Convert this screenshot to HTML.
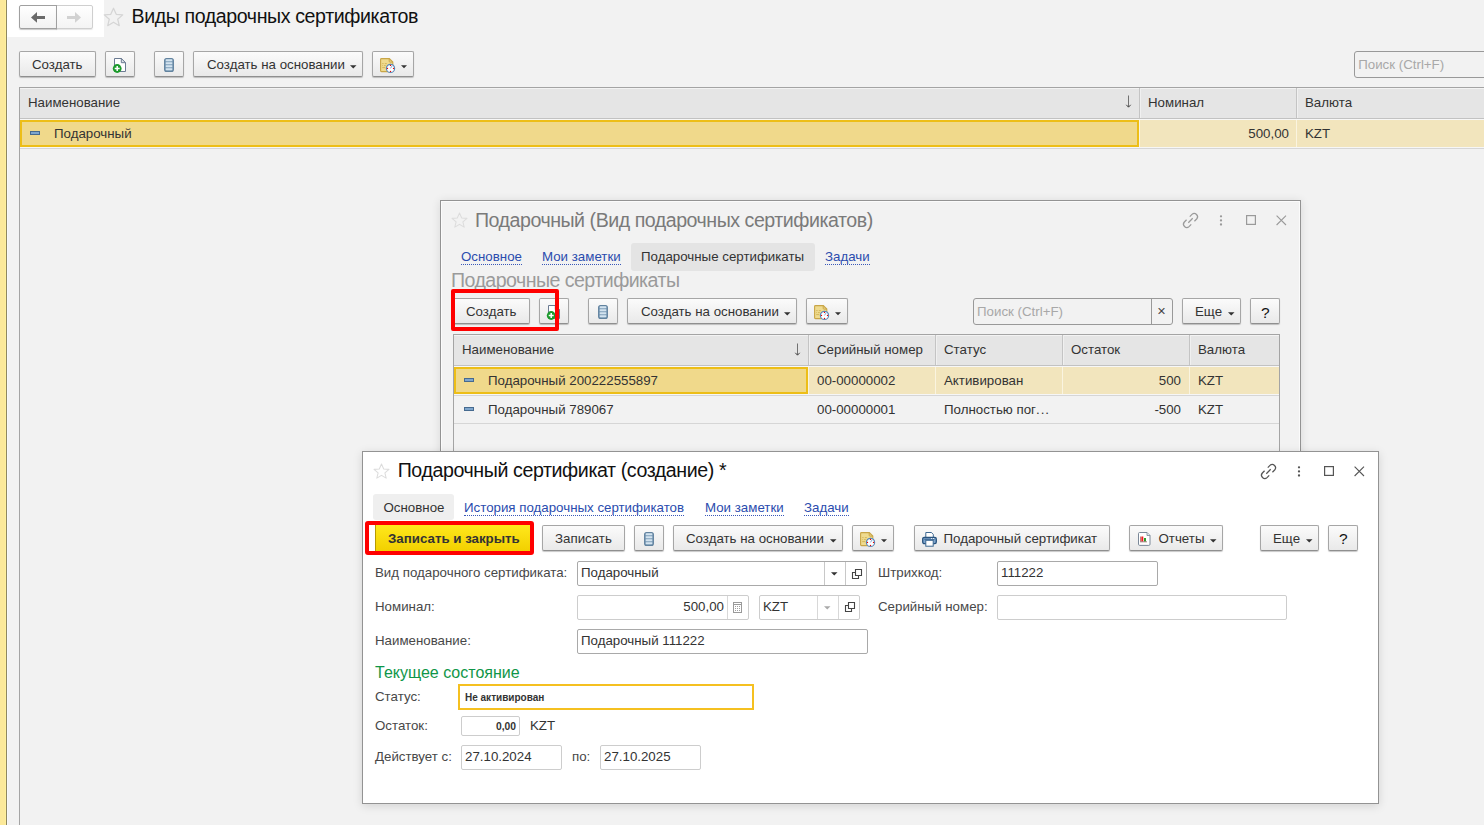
<!DOCTYPE html>
<html><head><meta charset="utf-8">
<style>
*{box-sizing:border-box;margin:0;padding:0}
html,body{width:1484px;height:825px;overflow:hidden}
body{position:relative;background:#f2f2f2;font-family:"Liberation Sans",sans-serif;font-size:13.3px;color:#333}
.a{position:absolute}
svg.a{overflow:visible}
.t{position:absolute;white-space:nowrap;line-height:1}
.btn{position:absolute;border:1px solid #a6a6a6;border-bottom-color:#8f8f8f;border-radius:2px;background:linear-gradient(#fbfbfb,#e9e9e9);box-shadow:0 1px 1px rgba(0,0,0,.22)}
.lnk{color:#2a4cae;border-bottom:1px dotted #3a58b8}
</style></head><body>
<div class="a" style="left:0px;top:0px;width:6px;height:825px;background:#fce99a"></div>
<div class="a" style="left:5px;top:0px;width:1px;height:825px;background:#fff09c"></div>
<div class="a" style="left:6px;top:0px;width:1px;height:825px;background:#8f8760"></div>
<div class="a" style="left:7px;top:37px;width:1px;height:788px;background:#f8f8f8"></div>
<div class="a" style="left:7px;top:0px;width:97px;height:37px;background:#fff"></div>
<div class="btn" style="left:19px;top:5px;width:38px;height:24px;background:linear-gradient(#fff,#f2f2f2);border-color:#a0a0a0;border-radius:2px 0 0 2px"></div>
<div class="btn" style="left:56px;top:5px;width:37px;height:24px;background:linear-gradient(#fff,#f4f4f4);border-color:#cfcfcf;border-radius:0 2px 2px 0;box-shadow:0 1px 1px rgba(0,0,0,.1)"></div>
<div class="a" style="left:56px;top:5px;width:1px;height:24px;background:#a0a0a0"></div>
<svg class="a" style="left:31px;top:12px" width="14" height="11" viewBox="0 0 14 11"><path d="M0 5.4 L6 0 V3.9 H14 V6.9 H6 V10.8 Z" fill="#6a6a6a"/></svg>
<svg class="a" style="left:67px;top:12px" width="14" height="11" viewBox="0 0 14 11"><path d="M14 5.4 L8 0 V3.9 H0 V6.9 H8 V10.8 Z" fill="#d2d2d2"/></svg>
<svg class="a" style="left:103.4px;top:6.5px" width="21" height="21" viewBox="0 0 20 20"><path d="M10 1.2 L12.6 7 L18.8 7.5 L14 11.6 L15.5 17.8 L10 14.5 L4.5 17.8 L6 11.6 L1.2 7.5 L7.4 7 Z" fill="none" stroke="#d5d5d5" stroke-width="1.2" stroke-linejoin="round"/></svg>
<div class="t" style="left:131.5px;top:7.11px;font-size:19.6px;color:#111;letter-spacing:-0.4px">Виды подарочных сертификатов</div>
<div class="btn" style="left:19px;top:51px;width:77px;height:26px;"></div>
<div class="t" style="left:32px;top:57.94px">Создать</div>
<div class="btn" style="left:105px;top:51px;width:30px;height:26px;"></div>
<svg class="a" style="left:112.1px;top:57.099999999999994px" width="17" height="17" viewBox="0 0 17 17"><path d="M2.5 1.5 H9.3 L13.5 5.7 V14.5 H2.5 Z" fill="#fff" stroke="#6b7b92" stroke-width="1"/>
<path d="M9.3 1.5 V5.7 H13.5 Z" fill="#dfe4ea" stroke="#6b7b92" stroke-width="1" stroke-linejoin="round"/>
<circle cx="5.2" cy="11.5" r="4.4" fill="#1c9a2c"/>
<path d="M5.2 9 V14 M2.7 11.5 H7.7" stroke="#fff" stroke-width="1.5"/></svg>
<div class="btn" style="left:154px;top:51px;width:30px;height:26px;"></div>
<svg class="a" style="left:164.2px;top:58.099999999999994px" width="10" height="14" viewBox="0 0 10 14"><rect x="0.6" y="0.6" width="8.8" height="12.8" rx="2" fill="#7f9fba" stroke="#62839f" stroke-width="1.1"/><rect x="1.6" y="1.35" width="6.8" height="1.8" rx="0.8" fill="#d3e3ef"/><rect x="1.6" y="4.35" width="6.8" height="1.8" rx="0.8" fill="#d3e3ef"/><rect x="1.6" y="7.35" width="6.8" height="1.8" rx="0.8" fill="#d3e3ef"/><rect x="1.6" y="10.35" width="6.8" height="1.8" rx="0.8" fill="#d3e3ef"/></svg>
<div class="btn" style="left:193px;top:51px;width:170px;height:26px;"></div>
<div class="t" style="left:207px;top:57.94px">Создать на основании</div>
<svg class="a" style="left:350px;top:65px" width="7" height="4" viewBox="0 0 7 4"><path d="M0 0.2 H6.5 L3.25 3.4 Z" fill="#333"/></svg>
<div class="btn" style="left:372px;top:51px;width:42px;height:26px;"></div>
<svg class="a" style="left:380.0px;top:58.0px" width="30" height="16" viewBox="0 0 30 16"><path d="M1.5 0.6 H9.3 L12.8 4.1 V12.7 Q12.8 13.6 11.9 13.6 H1.5 Q0.6 13.6 0.6 12.7 V1.5 Q0.6 0.6 1.5 0.6 Z" fill="#efdb8f" stroke="#c8a547" stroke-width="1.1"/>
<path d="M9.2 0.6 V3.3 Q9.2 4.1 10 4.1 H12.8" fill="none" stroke="#c8a547" stroke-width="1"/>
<path d="M2.2 5.6 H3.6 M4.8 5.6 H6.8 M2.2 7.6 H2.9 M3.9 7.6 H5.8 M2.2 9.6 H5.2" stroke="#d0b255" stroke-width="0.9"/>
<circle cx="10.5" cy="10.4" r="4.1" fill="#fff" stroke="#5a89b8" stroke-width="1.2"/>
<circle cx="10.5" cy="7.4" r="0.65" fill="#e00"/><circle cx="10.5" cy="13.4" r="0.65" fill="#e00"/>
<circle cx="7.5" cy="10.4" r="0.65" fill="#e00"/><circle cx="13.5" cy="10.4" r="0.65" fill="#e00"/>
<path d="M10.5 10.4 L12 8" stroke="#7a9ed0" stroke-width="0.9"/>
<path d="M21 7.3 H27 L24 10.3 Z" fill="#333"/></svg>
<div class="a" style="left:1354px;top:51px;width:140px;height:27px;background:#f2f2f2;border:1px solid #999;border-radius:3px"></div>
<div class="t" style="left:1358.2px;top:57.94px;color:#a8a8a8">Поиск (Ctrl+F)</div>
<div class="a" style="left:19px;top:87px;width:1480px;height:900px;border:1px solid #a4a4a4;background:#f2f2f2"></div>
<div class="a" style="left:20px;top:88px;width:1478px;height:31px;background:#e5e5e5;border-top:1px solid #f3f3f3;border-bottom:1px solid #c2c2c2"></div>
<div class="a" style="left:20px;top:119px;width:1478px;height:1px;background:#f7f7f7"></div>
<div class="a" style="left:1139px;top:88px;width:1px;height:30px;background:#c4c4c4"></div>
<div class="a" style="left:1140px;top:88px;width:1px;height:30px;background:#f0f0f0"></div>
<div class="a" style="left:1296px;top:88px;width:1px;height:30px;background:#c4c4c4"></div>
<div class="a" style="left:1297px;top:88px;width:1px;height:30px;background:#f0f0f0"></div>
<div class="a" style="left:20px;top:120px;width:1478px;height:27px;background:#f2e5bd"></div>
<div class="a" style="left:20px;top:147px;width:1478px;height:1px;background:#f6f6f6"></div>
<div class="a" style="left:20px;top:148px;width:1478px;height:1px;background:#d6d6d6"></div>
<div class="a" style="left:1139px;top:120px;width:1px;height:27px;background:#faf4e0"></div>
<div class="a" style="left:1296px;top:120px;width:1px;height:27px;background:#faf4e0"></div>
<div class="a" style="left:20px;top:120px;width:1119px;height:27px;background:#f0d98b;border:2px solid #edbe17"></div>
<div class="t" style="left:28px;top:96.34px">Наименование</div>
<svg class="a" style="left:1124px;top:95px" width="9" height="14" viewBox="0 0 9 14"><path d="M4.5 0.5 V12" stroke="#6a6a6a" stroke-width="0.95"/><path d="M2.3 9.8 L4.5 12.2 L6.7 9.8" fill="none" stroke="#444" stroke-width="1"/></svg>
<div class="t" style="left:1148px;top:96.34px">Номинал</div>
<div class="t" style="left:1305px;top:96.34px">Валюта</div>
<div class="a" style="left:30px;top:131px;width:10px;height:4.2px;background:#7ea6cd;border:1px solid #466a8f"></div>
<div class="t" style="left:54px;top:127.04px">Подарочный</div>
<div class="t" style="left:1289px;top:127.04px;transform:translateX(-100%)">500,00</div>
<div class="t" style="left:1305px;top:127.04px">KZT</div>
<div class="a" style="left:440px;top:200px;width:861px;height:300px;border:1px solid #939393;background:#f2f2f2;box-shadow:inset 0 0 0 1px #fbfbfb, 0 1px 9px rgba(0,0,0,.11)"></div>
<svg class="a" style="left:451px;top:211.5px" width="17" height="17" viewBox="0 0 20 20"><path d="M10 1.2 L12.6 7 L18.8 7.5 L14 11.6 L15.5 17.8 L10 14.5 L4.5 17.8 L6 11.6 L1.2 7.5 L7.4 7 Z" fill="none" stroke="#dcdcdc" stroke-width="1.2" stroke-linejoin="round"/></svg>
<div class="t" style="left:475px;top:210.51px;font-size:19.6px;color:#7a7a7a;letter-spacing:-0.47px">Подарочный (Вид подарочных сертификатов)</div>
<svg class="a" style="left:1182.5px;top:212.5px" width="104" height="16" viewBox="0 0 104 16"><g fill="none" stroke="#9a9a9a" stroke-width="1.25" stroke-linecap="butt">
<path d="M6.77 3.57 L8.97 1.37 A3.3 3.3 0 0 1 13.63 6.03 L11.43 8.23"/>
<path d="M3.57 6.77 L1.37 8.97 A3.3 3.3 0 0 0 6.03 13.63 L8.23 11.43"/>
<path d="M5.3 9.7 L9.7 5.3"/>
</g>
<circle cx="38" cy="3.3" r="1.15" fill="#9a9a9a"/><circle cx="38" cy="7.4" r="1.15" fill="#9a9a9a"/><circle cx="38" cy="11.5" r="1.15" fill="#9a9a9a"/>
<rect x="63.6" y="2.6" width="8.8" height="8.8" fill="none" stroke="#9a9a9a" stroke-width="1.2"/>
<path d="M93.6 2.6 L103 12 M103 2.6 L93.6 12" stroke="#9a9a9a" stroke-width="1.1"/></svg>
<div class="t" style="left:461px;top:249.74px"><span class="lnk">Основное</span></div>
<div class="t" style="left:542px;top:249.74px"><span class="lnk">Мои заметки</span></div>
<div class="a" style="left:631px;top:243px;width:184px;height:28px;background:#e4e4e4;border-radius:3px"></div>
<div class="t" style="left:641px;top:249.74px">Подарочные сертификаты</div>
<div class="t" style="left:825px;top:249.74px"><span class="lnk">Задачи</span></div>
<div class="t" style="left:451px;top:271.41px;font-size:19.6px;color:#9a9a9a;letter-spacing:-0.54px">Подарочные сертификаты</div>
<div class="btn" style="left:453px;top:298px;width:77px;height:26px;"></div>
<div class="t" style="left:466px;top:305.24px">Создать</div>
<div class="btn" style="left:539px;top:298px;width:30px;height:26px;"></div>
<svg class="a" style="left:546.1999999999999px;top:304.0px" width="17" height="17" viewBox="0 0 17 17"><path d="M2.5 1.5 H9.3 L13.5 5.7 V14.5 H2.5 Z" fill="#fff" stroke="#6b7b92" stroke-width="1"/>
<path d="M9.3 1.5 V5.7 H13.5 Z" fill="#dfe4ea" stroke="#6b7b92" stroke-width="1" stroke-linejoin="round"/>
<circle cx="5.2" cy="11.5" r="4.4" fill="#1c9a2c"/>
<path d="M5.2 9 V14 M2.7 11.5 H7.7" stroke="#fff" stroke-width="1.5"/></svg>
<div class="btn" style="left:588px;top:298px;width:30px;height:26px;"></div>
<svg class="a" style="left:597.9000000000001px;top:305.0px" width="10" height="14" viewBox="0 0 10 14"><rect x="0.6" y="0.6" width="8.8" height="12.8" rx="2" fill="#7f9fba" stroke="#62839f" stroke-width="1.1"/><rect x="1.6" y="1.35" width="6.8" height="1.8" rx="0.8" fill="#d3e3ef"/><rect x="1.6" y="4.35" width="6.8" height="1.8" rx="0.8" fill="#d3e3ef"/><rect x="1.6" y="7.35" width="6.8" height="1.8" rx="0.8" fill="#d3e3ef"/><rect x="1.6" y="10.35" width="6.8" height="1.8" rx="0.8" fill="#d3e3ef"/></svg>
<div class="btn" style="left:627px;top:298px;width:170px;height:26px;"></div>
<div class="t" style="left:641px;top:305.24px">Создать на основании</div>
<svg class="a" style="left:784px;top:312px" width="7" height="4" viewBox="0 0 7 4"><path d="M0 0.2 H6.5 L3.25 3.4 Z" fill="#333"/></svg>
<div class="btn" style="left:806px;top:298px;width:42px;height:26px;"></div>
<svg class="a" style="left:814.0px;top:304.9px" width="30" height="16" viewBox="0 0 30 16"><path d="M1.5 0.6 H9.3 L12.8 4.1 V12.7 Q12.8 13.6 11.9 13.6 H1.5 Q0.6 13.6 0.6 12.7 V1.5 Q0.6 0.6 1.5 0.6 Z" fill="#efdb8f" stroke="#c8a547" stroke-width="1.1"/>
<path d="M9.2 0.6 V3.3 Q9.2 4.1 10 4.1 H12.8" fill="none" stroke="#c8a547" stroke-width="1"/>
<path d="M2.2 5.6 H3.6 M4.8 5.6 H6.8 M2.2 7.6 H2.9 M3.9 7.6 H5.8 M2.2 9.6 H5.2" stroke="#d0b255" stroke-width="0.9"/>
<circle cx="10.5" cy="10.4" r="4.1" fill="#fff" stroke="#5a89b8" stroke-width="1.2"/>
<circle cx="10.5" cy="7.4" r="0.65" fill="#e00"/><circle cx="10.5" cy="13.4" r="0.65" fill="#e00"/>
<circle cx="7.5" cy="10.4" r="0.65" fill="#e00"/><circle cx="13.5" cy="10.4" r="0.65" fill="#e00"/>
<path d="M10.5 10.4 L12 8" stroke="#7a9ed0" stroke-width="0.9"/>
<path d="M21 7.3 H27 L24 10.3 Z" fill="#333"/></svg>
<div class="a" style="left:973px;top:298px;width:200px;height:27px;background:#f2f2f2;border:1px solid #999;border-radius:3px"></div>
<div class="a" style="left:1151px;top:299px;width:1px;height:25px;background:#999"></div>
<div class="t" style="left:977px;top:305.24px;color:#a8a8a8">Поиск (Ctrl+F)</div>
<div class="t" style="left:1161.5px;top:303.73px;font-size:14.5px;color:#444;transform:translateX(-50%)">×</div>
<div class="btn" style="left:1182px;top:298px;width:59px;height:26px;"></div>
<div class="t" style="left:1195px;top:305.24px">Еще</div>
<svg class="a" style="left:1228px;top:312px" width="7" height="4" viewBox="0 0 7 4"><path d="M0 0.2 H6.5 L3.25 3.4 Z" fill="#333"/></svg>
<div class="btn" style="left:1250px;top:298px;width:30px;height:26px;"></div>
<div class="t" style="left:1265.3px;top:304.88px;font-size:15.5px;color:#111;transform:translateX(-50%)">?</div>
<div class="a" style="left:451px;top:289px;width:108px;height:42px;border:4px solid #ff0000;border-radius:2px"></div>
<div class="a" style="left:453px;top:334px;width:827px;height:140px;border:1px solid #a4a4a4;background:#f2f2f2"></div>
<div class="a" style="left:454px;top:335px;width:825px;height:31px;background:#e5e5e5;border-top:1px solid #f3f3f3;border-bottom:1px solid #c2c2c2"></div>
<div class="a" style="left:454px;top:366px;width:825px;height:1px;background:#f7f7f7"></div>
<div class="a" style="left:808px;top:335px;width:1px;height:30px;background:#c4c4c4"></div>
<div class="a" style="left:809px;top:335px;width:1px;height:30px;background:#f0f0f0"></div>
<div class="a" style="left:935px;top:335px;width:1px;height:30px;background:#c4c4c4"></div>
<div class="a" style="left:936px;top:335px;width:1px;height:30px;background:#f0f0f0"></div>
<div class="a" style="left:1062px;top:335px;width:1px;height:30px;background:#c4c4c4"></div>
<div class="a" style="left:1063px;top:335px;width:1px;height:30px;background:#f0f0f0"></div>
<div class="a" style="left:1189px;top:335px;width:1px;height:30px;background:#c4c4c4"></div>
<div class="a" style="left:1190px;top:335px;width:1px;height:30px;background:#f0f0f0"></div>
<div class="a" style="left:454px;top:367px;width:825px;height:27px;background:#f2e5bd"></div>
<div class="a" style="left:454px;top:394px;width:825px;height:1px;background:#f6f6f6"></div>
<div class="a" style="left:454px;top:395px;width:825px;height:1px;background:#d6d6d6"></div>
<div class="a" style="left:808px;top:367px;width:1px;height:27px;background:#faf4e0"></div>
<div class="a" style="left:935px;top:367px;width:1px;height:27px;background:#faf4e0"></div>
<div class="a" style="left:1062px;top:367px;width:1px;height:27px;background:#faf4e0"></div>
<div class="a" style="left:1189px;top:367px;width:1px;height:27px;background:#faf4e0"></div>
<div class="a" style="left:454px;top:367px;width:354px;height:27px;background:#f0d98b;border:2px solid #edbe17"></div>
<div class="a" style="left:454px;top:423px;width:825px;height:1px;background:#d6d6d6"></div>
<div class="t" style="left:462px;top:342.74px">Наименование</div>
<div class="t" style="left:817px;top:342.74px">Серийный номер</div>
<div class="t" style="left:944px;top:342.74px">Статус</div>
<div class="t" style="left:1071px;top:342.74px">Остаток</div>
<div class="t" style="left:1198px;top:342.74px">Валюта</div>
<svg class="a" style="left:793px;top:343px" width="9" height="14" viewBox="0 0 9 14"><path d="M4.5 0.5 V12" stroke="#6a6a6a" stroke-width="0.95"/><path d="M2.3 9.8 L4.5 12.2 L6.7 9.8" fill="none" stroke="#444" stroke-width="1"/></svg>
<div class="a" style="left:464px;top:378px;width:10px;height:4.2px;background:#7ea6cd;border:1px solid #466a8f"></div>
<div class="a" style="left:464px;top:407px;width:10px;height:4.2px;background:#7ea6cd;border:1px solid #466a8f"></div>
<div class="t" style="left:488px;top:373.54px">Подарочный 200222555897</div>
<div class="t" style="left:817px;top:373.54px">00-00000002</div>
<div class="t" style="left:944px;top:373.54px">Активирован</div>
<div class="t" style="left:1181px;top:373.54px;transform:translateX(-100%)">500</div>
<div class="t" style="left:1198px;top:373.54px">KZT</div>
<div class="t" style="left:488px;top:402.64px">Подарочный 789067</div>
<div class="t" style="left:817px;top:402.64px">00-00000001</div>
<div class="t" style="left:944px;top:402.64px">Полностью пог<span style='letter-spacing:1px'>..</span>.</div>
<div class="t" style="left:1181px;top:402.64px;transform:translateX(-100%)">-500</div>
<div class="t" style="left:1198px;top:402.64px">KZT</div>
<div class="a" style="left:362px;top:451px;width:1017px;height:353px;border:1px solid #939393;background:#fff;box-shadow:0 2px 9px rgba(0,0,0,.13)"></div>
<svg class="a" style="left:373px;top:462.5px" width="17" height="17" viewBox="0 0 20 20"><path d="M10 1.2 L12.6 7 L18.8 7.5 L14 11.6 L15.5 17.8 L10 14.5 L4.5 17.8 L6 11.6 L1.2 7.5 L7.4 7 Z" fill="none" stroke="#dcdcdc" stroke-width="1.2" stroke-linejoin="round"/></svg>
<div class="t" style="left:397.7px;top:461.11px;font-size:19.6px;color:#111;letter-spacing:-0.4px">Подарочный сертификат (создание) *</div>
<svg class="a" style="left:1260.5px;top:463.5px" width="104" height="16" viewBox="0 0 104 16"><g fill="none" stroke="#555" stroke-width="1.25" stroke-linecap="butt">
<path d="M6.77 3.57 L8.97 1.37 A3.3 3.3 0 0 1 13.63 6.03 L11.43 8.23"/>
<path d="M3.57 6.77 L1.37 8.97 A3.3 3.3 0 0 0 6.03 13.63 L8.23 11.43"/>
<path d="M5.3 9.7 L9.7 5.3"/>
</g>
<circle cx="38" cy="3.3" r="1.15" fill="#555"/><circle cx="38" cy="7.4" r="1.15" fill="#555"/><circle cx="38" cy="11.5" r="1.15" fill="#555"/>
<rect x="63.6" y="2.6" width="8.8" height="8.8" fill="none" stroke="#555" stroke-width="1.2"/>
<path d="M93.6 2.6 L103 12 M103 2.6 L93.6 12" stroke="#555" stroke-width="1.1"/></svg>
<div class="a" style="left:373px;top:494px;width:81px;height:26px;background:#efefef;border-radius:3px"></div>
<div class="t" style="left:383.5px;top:500.94px">Основное</div>
<div class="t" style="left:464px;top:500.94px"><span class="lnk">История подарочных сертификатов</span></div>
<div class="t" style="left:705px;top:500.94px"><span class="lnk">Мои заметки</span></div>
<div class="t" style="left:804px;top:500.94px"><span class="lnk">Задачи</span></div>
<div class="a" style="left:365px;top:521px;width:169px;height:34px;border:4px solid #ff0000;border-radius:3px;background:#fff"></div>
<div class="a" style="left:375px;top:525px;width:155px;height:26px;background:linear-gradient(#ffe81c,#f2d000);border-left:1px solid #b89a00"></div>
<div class="t" style="left:388px;top:531.54px;color:#333;font-weight:700">Записать и закрыть</div>
<div class="btn" style="left:542px;top:525px;width:83px;height:26px;"></div>
<div class="t" style="left:555px;top:531.54px">Записать</div>
<div class="btn" style="left:634px;top:525px;width:30px;height:26px;"></div>
<svg class="a" style="left:644.2px;top:532.3px" width="10" height="14" viewBox="0 0 10 14"><rect x="0.6" y="0.6" width="8.8" height="12.8" rx="2" fill="#7f9fba" stroke="#62839f" stroke-width="1.1"/><rect x="1.6" y="1.35" width="6.8" height="1.8" rx="0.8" fill="#d3e3ef"/><rect x="1.6" y="4.35" width="6.8" height="1.8" rx="0.8" fill="#d3e3ef"/><rect x="1.6" y="7.35" width="6.8" height="1.8" rx="0.8" fill="#d3e3ef"/><rect x="1.6" y="10.35" width="6.8" height="1.8" rx="0.8" fill="#d3e3ef"/></svg>
<div class="btn" style="left:673px;top:525px;width:170px;height:26px;"></div>
<div class="t" style="left:686px;top:531.54px">Создать на основании</div>
<svg class="a" style="left:830px;top:539px" width="7" height="4" viewBox="0 0 7 4"><path d="M0 0.2 H6.5 L3.25 3.4 Z" fill="#333"/></svg>
<div class="btn" style="left:852px;top:525px;width:42px;height:26px;"></div>
<svg class="a" style="left:860.0px;top:532.2px" width="30" height="16" viewBox="0 0 30 16"><path d="M1.5 0.6 H9.3 L12.8 4.1 V12.7 Q12.8 13.6 11.9 13.6 H1.5 Q0.6 13.6 0.6 12.7 V1.5 Q0.6 0.6 1.5 0.6 Z" fill="#efdb8f" stroke="#c8a547" stroke-width="1.1"/>
<path d="M9.2 0.6 V3.3 Q9.2 4.1 10 4.1 H12.8" fill="none" stroke="#c8a547" stroke-width="1"/>
<path d="M2.2 5.6 H3.6 M4.8 5.6 H6.8 M2.2 7.6 H2.9 M3.9 7.6 H5.8 M2.2 9.6 H5.2" stroke="#d0b255" stroke-width="0.9"/>
<circle cx="10.5" cy="10.4" r="4.1" fill="#fff" stroke="#5a89b8" stroke-width="1.2"/>
<circle cx="10.5" cy="7.4" r="0.65" fill="#e00"/><circle cx="10.5" cy="13.4" r="0.65" fill="#e00"/>
<circle cx="7.5" cy="10.4" r="0.65" fill="#e00"/><circle cx="13.5" cy="10.4" r="0.65" fill="#e00"/>
<path d="M10.5 10.4 L12 8" stroke="#7a9ed0" stroke-width="0.9"/>
<path d="M21 7.3 H27 L24 10.3 Z" fill="#333"/></svg>
<div class="btn" style="left:914px;top:525px;width:196px;height:26px;"></div>
<svg class="a" style="left:921.5px;top:531.5px" width="15" height="15" viewBox="0 0 15 15"><path d="M3.8 0.5 H9.5 L11.3 2.5 V5.5 H3.8 Z" fill="#fff" stroke="#3d6891" stroke-width="1"/>
<rect x="0.7" y="5.3" width="13.6" height="6.4" rx="1.6" fill="#7ea4cc" stroke="#28537e" stroke-width="1.3"/>
<path d="M2.3 7.2 H12.5" stroke="#28537e" stroke-width="0.9"/>
<circle cx="9.6" cy="6.5" r="0.6" fill="#fff"/><circle cx="11.6" cy="6.5" r="0.6" fill="#fff"/>
<rect x="3.8" y="8.3" width="7.4" height="5.9" fill="#fff" stroke="#3d6891" stroke-width="1"/></svg>
<div class="t" style="left:943.5px;top:531.54px">Подарочный сертификат</div>
<div class="btn" style="left:1129px;top:525px;width:94px;height:26px;"></div>
<svg class="a" style="left:1137.5px;top:532px" width="13" height="14" viewBox="0 0 13 14"><path d="M1.5 0.5 H9 L12 3.5 V12.2 Q12 13.4 10.8 13.4 H1.7 Q0.5 13.4 0.5 12.2 V1.7 Q0.5 0.5 1.5 0.5 Z" fill="#fff" stroke="#7a8898" stroke-width="1"/>
<path d="M9 0.5 V3.5 H12" fill="#dfe5ea" stroke="#7a8898" stroke-width="0.8"/>
<rect x="2.3" y="4.5" width="0.7" height="5" fill="#a05050"/>
<rect x="3.3" y="4.5" width="2" height="5" fill="#ee2020"/>
<rect x="6" y="6" width="2" height="3.5" fill="#2aa02a"/>
<path d="M2 9.8 H9" stroke="#8a6060" stroke-width="0.8"/></svg>
<div class="t" style="left:1158.5px;top:531.54px">Отчеты</div>
<svg class="a" style="left:1210px;top:539px" width="7" height="4" viewBox="0 0 7 4"><path d="M0 0.2 H6.5 L3.25 3.4 Z" fill="#333"/></svg>
<div class="btn" style="left:1260px;top:525px;width:59px;height:26px;"></div>
<div class="t" style="left:1273px;top:531.54px">Еще</div>
<svg class="a" style="left:1306px;top:539px" width="7" height="4" viewBox="0 0 7 4"><path d="M0 0.2 H6.5 L3.25 3.4 Z" fill="#333"/></svg>
<div class="btn" style="left:1328px;top:525px;width:30px;height:26px;"></div>
<div class="t" style="left:1343.3px;top:531.38px;font-size:15.5px;color:#111;transform:translateX(-50%)">?</div>
<div class="t" style="left:375px;top:566.04px;color:#484848">Вид подарочного сертификата:</div>
<div class="a" style="left:577px;top:561px;width:290px;height:25px;background:#fff;border:1px solid #a9a9a9;border-radius:2px"></div>
<div class="a" style="left:824px;top:562px;width:1px;height:23px;background:#c8c8c8"></div>
<div class="a" style="left:845px;top:562px;width:1px;height:23px;background:#c8c8c8"></div>
<svg class="a" style="left:831px;top:572px" width="7" height="4" viewBox="0 0 7 4"><path d="M0 0.2 H6.5 L3.25 3.4 Z" fill="#333"/></svg>
<svg class="a" style="left:852px;top:569px" width="10" height="10" viewBox="0 0 10 10"><path d="M3.5 0.5 H9.5 V6.5 H3.5 Z" fill="none" stroke="#444" stroke-width="1.1"/>
<path d="M3 3.5 H0.5 V9.5 H6.5 V7" fill="none" stroke="#444" stroke-width="1.1"/></svg>
<div class="t" style="left:581px;top:566.04px">Подарочный</div>
<div class="t" style="left:878px;top:566.04px;color:#484848">Штрихкод:</div>
<div class="a" style="left:997px;top:561px;width:161px;height:25px;background:#fff;border:1px solid #a9a9a9;border-radius:2px"></div>
<div class="t" style="left:1001px;top:566.04px">111222</div>
<div class="t" style="left:375px;top:600.24px;color:#484848">Номинал:</div>
<div class="a" style="left:577px;top:595px;width:172px;height:25px;background:#fff;border:1px solid #cdcdcd;border-radius:2px"></div>
<div class="a" style="left:727px;top:596px;width:1px;height:23px;background:#d8d8d8"></div>
<svg class="a" style="left:733px;top:602px" width="9" height="11" viewBox="0 0 9 11"><rect x="0.5" y="0.5" width="8" height="10" fill="#fff" stroke="#9a9a9a"/>
<path d="M0.5 2.5 H8.5" stroke="#9a9a9a"/><g fill="#a0a0a0"><rect x="2" y="4" width="1" height="1"/><rect x="2" y="6" width="1" height="1"/><rect x="2" y="8" width="1" height="1"/><rect x="4" y="4" width="1" height="1"/><rect x="4" y="6" width="1" height="1"/><rect x="4" y="8" width="1" height="1"/><rect x="6" y="4" width="1" height="1"/><rect x="6" y="6" width="1" height="1"/><rect x="6" y="8" width="1" height="1"/></g></svg>
<div class="t" style="left:724px;top:600.24px;transform:translateX(-100%)">500,00</div>
<div class="a" style="left:759px;top:595px;width:101px;height:25px;background:#fff;border:1px solid #cdcdcd;border-radius:2px"></div>
<div class="a" style="left:817px;top:596px;width:1px;height:23px;background:#d8d8d8"></div>
<div class="a" style="left:838px;top:596px;width:1px;height:23px;background:#d8d8d8"></div>
<svg class="a" style="left:824px;top:606px" width="7" height="4" viewBox="0 0 7 4"><path d="M0 0.2 H6.5 L3.25 3.4 Z" fill="#aaa"/></svg>
<svg class="a" style="left:845px;top:602px" width="10" height="10" viewBox="0 0 10 10"><path d="M3.5 0.5 H9.5 V6.5 H3.5 Z" fill="none" stroke="#444" stroke-width="1.1"/>
<path d="M3 3.5 H0.5 V9.5 H6.5 V7" fill="none" stroke="#444" stroke-width="1.1"/></svg>
<div class="t" style="left:763px;top:600.24px">KZT</div>
<div class="t" style="left:878px;top:600.24px;color:#484848">Серийный номер:</div>
<div class="a" style="left:997px;top:595px;width:290px;height:25px;background:#fff;border:1px solid #cdcdcd;border-radius:2px"></div>
<div class="t" style="left:375px;top:634.14px;color:#484848">Наименование:</div>
<div class="a" style="left:577px;top:629px;width:291px;height:25px;background:#fff;border:1px solid #a9a9a9;border-radius:2px"></div>
<div class="t" style="left:581px;top:634.14px">Подарочный 111222</div>
<div class="t" style="left:375px;top:664.86px;font-size:16px;color:#0f9648">Текущее состояние</div>
<div class="t" style="left:375px;top:690.14px;color:#484848">Статус:</div>
<div class="a" style="left:458px;top:684px;width:296px;height:26px;border:2px solid #f5c020;background:#fff"></div>
<div class="t" style="left:465px;top:692.93px;font-size:10px;font-weight:700">Не активирован</div>
<div class="t" style="left:375px;top:718.74px;color:#484848">Остаток:</div>
<div class="a" style="left:461px;top:716px;width:59px;height:20px;background:#fff;border:1px solid #cdcdcd;border-radius:2px"></div>
<div class="t" style="left:516px;top:721.78px;font-size:10.3px;font-weight:700;transform:translateX(-100%)">0,00</div>
<div class="t" style="left:530px;top:718.74px">KZT</div>
<div class="t" style="left:375px;top:750.34px;color:#484848">Действует с:</div>
<div class="a" style="left:461px;top:745px;width:101px;height:25px;background:#fff;border:1px solid #cdcdcd;border-radius:2px"></div>
<div class="t" style="left:465px;top:750.34px">27.10.2024</div>
<div class="t" style="left:572px;top:750.34px;color:#484848">по:</div>
<div class="a" style="left:600px;top:745px;width:101px;height:25px;background:#fff;border:1px solid #cdcdcd;border-radius:2px"></div>
<div class="t" style="left:604px;top:750.34px">27.10.2025</div>
</body></html>
